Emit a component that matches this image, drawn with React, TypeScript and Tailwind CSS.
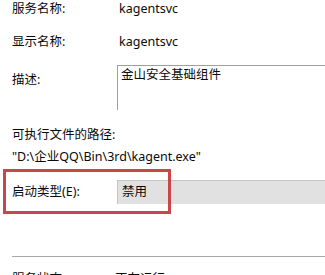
export default function App() {
  return (
    <div
      className="relative h-[275px] w-[325px] overflow-hidden bg-white pl-[12px] text-[12.5px] text-[#0a0a0a]"
      style={{ fontFamily: '"Noto Sans", "Noto Sans CJK SC", sans-serif' }}
    >
      {/* 服务名称 */}
      <div className="flex h-[18px] items-center">
        <span className="w-[107px]">服务名称:</span>
        <span>kagentsvc</span>
      </div>

      {/* 显示名称 */}
      <div className="mt-[15px] flex h-[18px] items-center">
        <span className="w-[107px]">显示名称:</span>
        <span>kagentsvc</span>
      </div>

      {/* 描述 */}
      <div className="mt-[14px] flex">
        <span className="mt-[6px] h-[18px] w-[105px] leading-[18px]">描述:</span>
        <div className="h-[45px] flex-1 border-l border-t border-[#a0a0a0] px-[3px] pt-[1px] leading-[16px]">
          金山安全基础组件
        </div>
      </div>

      {/* 可执行文件的路径 */}
      <div className="mt-[16px] h-[18px] leading-[18px]">可执行文件的路径:</div>
      <div className="mt-[4px] h-[18px] leading-[18px]">"D:\企业QQ\Bin\3rd\kagent.exe"</div>

      {/* 启动类型 */}
      <div className="mt-[14px] flex h-[24px] items-center">
        <span className="w-[105px]">启动类型(E):</span>
        <div className="flex h-[24px] flex-1 items-center border-l border-t border-[#c4c4c4] bg-[#e1e1e1] pl-[4px]">
          禁用
        </div>
      </div>

      {/* 标注框 */}
      <div className="absolute left-[3px] top-[169px] h-[45px] w-[168px] border-[3px] border-[#c9474b]" />

      {/* 分隔线 */}
      <div className="mt-[52px] h-px bg-[#a8a8a8]" />

      {/* 服务状态 */}
      <div className="mt-[13px] flex h-[18px] items-center">
        <span className="w-[103px]">服务状态:</span>
        <span>正在运行</span>
      </div>
    </div>
  );
}
